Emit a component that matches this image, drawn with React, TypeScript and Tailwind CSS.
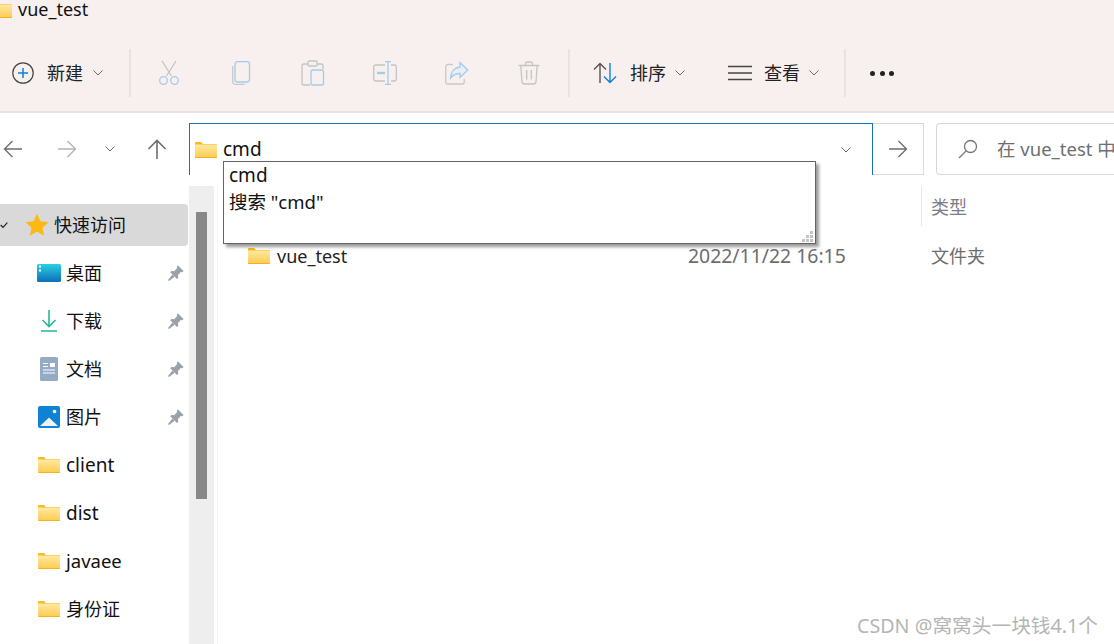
import type { ReactNode } from "react"

const font = "font-['Noto_Sans','Noto_Sans_CJK_SC',sans-serif]"

function Folder({ className = "" }: { className?: string }) {
  return (
    <svg viewBox="0 0 22 16" className={className}>
      <defs>
        <linearGradient id="folderFill" x1="0" y1="0" x2="0" y2="1">
          <stop offset="0" stopColor="#ffe9a4" />
          <stop offset="1" stopColor="#fdcb50" />
        </linearGradient>
      </defs>
      <path d="M0 1a1 1 0 0 1 1-1h5l2 2h14v4H0z" fill="#fbb91f" />
      <rect x="0" y="2.5" width="22" height="13.5" fill="url(#folderFill)" />
      <rect x="0" y="15" width="22" height="1" fill="#f5b21d" />
    </svg>
  )
}

function Chevron({ className = "" }: { className?: string }) {
  return (
    <svg viewBox="0 0 10 6" className={className} fill="none" stroke="#6b6b6b" strokeWidth="1">
      <path d="M0.5 0.5 5 5l4.5-4.5" />
    </svg>
  )
}

function Sep({ className = "" }: { className?: string }) {
  return <div className={`h-12 w-0.5 shrink-0 bg-[#e9e2e0] ${className}`} />
}

function Slot({ children }: { children: ReactNode }) {
  return <div className="flex w-[72px] shrink-0 items-center justify-center">{children}</div>
}

function Pin() {
  return (
    <svg viewBox="0 0 16 16" className="h-4 w-4" fill="#98a2aa">
      <path d="M10 .5 15.6 6 14.3 7.2 12.8 7 10 10 10.3 12.7 9 14 2.2 7.2 3.5 6 6.2 6.2 9 3.2 8.8 1.7z" />
      <path d="M4.5 9.5 6.7 11.7 1 16 0 15z" />
    </svg>
  )
}

function NavRow({ icon, label, pin, selected, labelClass = "" }: { icon: ReactNode; label: string; pin?: boolean; selected?: boolean; labelClass?: string }) {
  return (
    <div className="flex h-12 items-center">
      <div className={`flex h-[42px] w-[188px] items-center rounded-r ${selected ? "bg-[#d9d9d9]" : ""}`}>
        {icon}
        <span className={`text-[#111] ${labelClass}`}>{label}</span>
        {pin && (
          <span className="ml-auto mr-1">
            <Pin />
          </span>
        )}
      </div>
    </div>
  )
}

const folderIcon = <Folder className="ml-[38px] mr-[6px] h-4 w-[22px] shrink-0" />

export default function App() {
  return (
    <div className={`relative flex h-[644px] w-[1114px] flex-col overflow-hidden bg-white text-[18px] ${font}`}>
      {/* Header */}
      <header className="h-[113px] shrink-0 border-b-2 border-[#e9e2e0] bg-[#f7f0ee]">
        <div className="flex h-[18px] items-center">
          <Folder className="-ml-2.5 mr-1.5 mt-0.5 h-4 w-[22px]" />
          <span className="text-[#111]">vue_test</span>
        </div>

        <div className="mt-[31px] flex h-12 items-center">
          <svg viewBox="0 0 22 22" className="ml-3 h-[22px] w-[22px]" fill="none">
            <circle cx="11" cy="11" r="10.2" stroke="#444" strokeWidth="1.2" />
            <path d="M11 6v10M6 11h10" stroke="#0f7fd9" strokeWidth="1.5" />
          </svg>
          <span className="ml-[13px] text-[#222]">新建</span>
          <Chevron className="ml-2.5 mr-[26px] h-1.5 w-2.5" />
          <Sep />
          <div className="ml-0.5 flex">
            <Slot>
              <svg viewBox="0 0 24 26" className="h-[26px] w-6" fill="none" strokeWidth="1.3">
                <path d="M5 1 14.5 16M19 1 9.5 16" stroke="#c4c4c4" />
                <circle cx="6.5" cy="20.5" r="3.8" stroke="#a5cbea" />
                <circle cx="17.5" cy="20.5" r="3.8" stroke="#a5cbea" />
              </svg>
            </Slot>
            <Slot>
              <svg viewBox="0 0 20 24" className="h-6 w-5" fill="none" strokeWidth="1.3">
                <path d="M1.7 5v15.5a3 3 0 0 0 3 3h9" stroke="#c9c9c9" />
                <rect x="4" y="0.7" width="14.5" height="20.3" rx="2.5" stroke="#a5cbea" />
              </svg>
            </Slot>
            <Slot>
              <svg viewBox="0 0 24 26" className="h-[26px] w-6" fill="none" strokeWidth="1.3">
                <path d="M7 4H3a2 2 0 0 0-2 2v17a2 2 0 0 0 2 2h6M16 4h4a2 2 0 0 1 2 2v3" stroke="#c4c4c4" />
                <rect x="7" y="1" width="9" height="5" rx="1.2" stroke="#c4c4c4" />
                <rect x="10" y="10" width="12.5" height="15" rx="2" stroke="#a5cbea" />
              </svg>
            </Slot>
            <Slot>
              <svg viewBox="0 0 24 24" className="h-6 w-6" fill="none" strokeWidth="1.3">
                <path d="M12 4H2.5A1.8 1.8 0 0 0 .7 5.8v12.4A1.8 1.8 0 0 0 2.5 20H12M18 4h3.5a1.8 1.8 0 0 1 1.8 1.8v12.4a1.8 1.8 0 0 1-1.8 1.8H18" stroke="#c4c4c4" />
                <path d="M15 1v22M12 .7h6M12 23.3h6" stroke="#a5cbea" />
                <path d="M4 12h8" stroke="#a5cbea" strokeWidth="2.4" />
              </svg>
            </Slot>
            <Slot>
              <svg viewBox="0 0 24 24" className="h-6 w-6" fill="none" strokeWidth="1.3">
                <path d="M8 3.5H3A2.3 2.3 0 0 0 .7 5.8v14.9A2.3 2.3 0 0 0 3 23h14a2.3 2.3 0 0 0 2.3-2.3V18" stroke="#c9c9c9" />
                <path d="M15 1.5 22.8 9 15 16.5v-4c-4 0-7 1.2-9.5 4.5C6 11 9.5 6.5 15 6z" stroke="#a5cbea" fill="#e6eff5" />
              </svg>
            </Slot>
            <Slot>
              <svg viewBox="0 0 22 24" className="h-6 w-[22px]" fill="none" stroke="#c4c4c4" strokeWidth="1.3">
                <path d="M.5 4.5h21M7.5 4.5V3a2 2 0 0 1 2-2h3a2 2 0 0 1 2 2v1.5" />
                <path d="M2.8 4.5 4 20.7a2.5 2.5 0 0 0 2.5 2.3h9a2.5 2.5 0 0 0 2.5-2.3l1.2-16.2" />
                <path d="M8.7 9v9.5M13.3 9v9.5" />
              </svg>
            </Slot>
          </div>
          <Sep className="ml-[3px]" />
          <svg viewBox="0 0 24 22" className="ml-[23px] h-[22px] w-6" fill="none" strokeWidth="1.4">
            <path d="M7 21V1.5M1 7.5l6-6 6 6" stroke="#555" />
            <path d="M17 1v19.5M11 14.5l6 6 6-6" stroke="#0f7fd9" />
          </svg>
          <span className="ml-[13px] text-[#222]">排序</span>
          <Chevron className="ml-[9px] h-1.5 w-2.5" />
          <svg viewBox="0 0 24 16" className="ml-[43px] h-4 w-6" fill="none" stroke="#444" strokeWidth="1.4">
            <path d="M0 1.5h24M0 8h24M0 14.5h24" />
          </svg>
          <span className="ml-3 text-[#222]">查看</span>
          <Chevron className="ml-[9px] mr-[25px] h-1.5 w-2.5" />
          <Sep />
          <div className="ml-6 flex gap-[4.5px]">
            <span className="h-[5px] w-[5px] rounded-full bg-[#222]" />
            <span className="h-[5px] w-[5px] rounded-full bg-[#222]" />
            <span className="h-[5px] w-[5px] rounded-full bg-[#222]" />
          </div>
        </div>
      </header>

      {/* Address row */}
      <div className="mt-[10px] flex h-[52px] shrink-0 items-stretch">
        <div className="flex w-[189px] shrink-0 items-center">
          <svg viewBox="0 0 20 20" className="ml-[3px] h-5 w-5" fill="none" stroke="#6e6e6e" strokeWidth="1.4">
            <path d="M19 10H1.5M9.5 2 1.5 10l8 8" />
          </svg>
          <svg viewBox="0 0 20 20" className="ml-[34px] h-5 w-5" fill="none" stroke="#b4b4b4" strokeWidth="1.4">
            <path d="M1 10h17.5M10.5 2l8 8-8 8" />
          </svg>
          <Chevron className="ml-[28px] h-1.5 w-2.5" />
          <svg viewBox="0 0 20 20" className="ml-8 h-5 w-5" fill="none" stroke="#6e6e6e" strokeWidth="1.6">
            <path d="M10 20V1.5M1.5 10 10 1.5 18.5 10" />
          </svg>
        </div>
        <div className="flex w-[684px] shrink-0 items-center border-x border-t border-[#1a73b8]">
          <Folder className="ml-[5px] h-4 w-[22px]" />
          <span className="ml-1.5 text-[19px] text-[#111]">cmd</span>
          <Chevron className="ml-auto mr-5 h-1.5 w-3" />
        </div>
        <div className="flex w-[51px] shrink-0 items-center justify-center border-y border-r border-[#d9d9d9]">
          <svg viewBox="0 0 20 20" className="h-5 w-5" fill="none" stroke="#6e6e6e" strokeWidth="1.4">
            <path d="M1 10h17.5M10.5 2l8 8-8 8" />
          </svg>
        </div>
        <div className="ml-3 flex flex-1 items-center overflow-hidden whitespace-nowrap rounded-l-sm border-y border-l border-[#d9d9d9] text-[#6f6f6f]">
          <svg viewBox="0 0 20 20" className="ml-[21px] h-5 w-5 shrink-0" fill="none" stroke="#777" strokeWidth="1.3">
            <circle cx="12.5" cy="7.5" r="6" />
            <path d="M8 12 1 19" />
          </svg>
          <span className="ml-[19px] text-[18.5px]">在 vue_test 中搜索</span>
        </div>
      </div>

      {/* Body */}
      <div className="mt-[11px] flex min-h-0 flex-1">
        <nav className="w-[189px] shrink-0 pt-[15px]">
          <NavRow
            selected
            label="快速访问"
            icon={
              <>
                <svg viewBox="0 0 12 10" className="mr-[17px] h-2 w-2 shrink-0" fill="none" stroke="#222" strokeWidth="1.8">
                  <path d="M1 5l3.5 3.5L11 1.5" />
                </svg>
                <svg viewBox="0 0 24 24" className="mr-[5px] h-6 w-6 shrink-0" fill="#fcb813">
                  <path d="M12 .8l3.4 7.5 8.1.9-6 5.5 1.7 8L12 18.6l-7.2 4.1 1.7-8-6-5.5 8.1-.9z" />
                </svg>
              </>
            }
          />
          <NavRow
            pin
            label="桌面"
            icon={
              <svg viewBox="0 0 24 18" className="ml-[37px] mr-[5px] h-[18px] w-6 shrink-0">
                <defs>
                  <linearGradient id="deskFill" x1="0" y1="0" x2="0" y2="1">
                    <stop offset="0" stopColor="#2ad0e4" />
                    <stop offset="1" stopColor="#0c6fb8" />
                  </linearGradient>
                </defs>
                <rect width="24" height="18" rx="1.5" fill="url(#deskFill)" />
                <rect x="2" y="1.5" width="2" height="2" fill="#fff" />
                <rect x="2" y="5.5" width="2" height="2" fill="#fff" />
              </svg>
            }
          />
          <NavRow
            pin
            label="下载"
            icon={
              <svg viewBox="0 0 16 22" className="ml-[41px] mr-[9px] h-[22px] w-4 shrink-0" fill="none" stroke="#25b79d" strokeWidth="1.6">
                <path d="M8 0v16M1.5 10 8 16.5 14.5 10M0 21h16" />
              </svg>
            }
          />
          <NavRow
            pin
            label="文档"
            icon={
              <svg viewBox="0 0 18 24" className="ml-10 mr-2 h-6 w-[18px] shrink-0">
                <rect width="18" height="24" rx="1.5" fill="#94abc6" />
                <path d="M3 6.5h5M3 9.5h5M3 13h12M3 16h12" stroke="#fff" strokeWidth="1" />
                <rect x="10" y="6" width="5" height="4" fill="#fff" />
              </svg>
            }
          />
          <NavRow
            pin
            label="图片"
            icon={
              <svg viewBox="0 0 22 22" className="ml-[38px] mr-1.5 h-[22px] w-[22px] shrink-0">
                <rect width="22" height="22" rx="2" fill="#0f82d6" />
                <circle cx="16.5" cy="5.5" r="1.8" fill="#fff" />
                <path d="M2 20 11 11.5 20 20z" fill="#eaf4fc" />
              </svg>
            }
          />
          <NavRow label="client" labelClass="text-[19px]" icon={folderIcon} />
          <NavRow label="dist" labelClass="text-[19px]" icon={folderIcon} />
          <NavRow label="javaee" labelClass="text-[18.5px]" icon={folderIcon} />
          <NavRow label="身份证" icon={folderIcon} />
        </nav>

        <div className="w-[25px] shrink-0 bg-[#eeeeee] pl-[7px] pt-[26px]">
          <div className="h-[287px] w-[11px] bg-[#888888]" />
        </div>

        <main className="ml-[3px] flex-1 border-l border-[#f5f5f5] text-[#6d6d6d]">
          <div className="ml-[703px] flex h-10 items-center border-l border-[#e6e6e6] pl-[9px] pt-0.5 text-[#7c7c88]">类型</div>
          <div className="mt-3 flex h-9 items-center">
            <Folder className="ml-[30px] mr-[7px] h-4 w-[22px] shrink-0" />
            <span className="w-[411px] shrink-0 text-[#222]">vue_test</span>
            <span className="w-[243px] shrink-0 text-[19.4px]">2022/11/22 16:15</span>
            <span>文件夹</span>
          </div>
        </main>
      </div>

      {/* Autocomplete popup */}
      <div className="absolute left-[223px] top-[161px] h-[83px] w-[593px] border border-[#646464] bg-white pl-[5px] text-[18.5px] text-[#111] shadow-[3px_3px_3px_rgba(0,0,0,0.4)]">
        <div className="flex h-[26px] items-center pt-px text-[19px]">cmd</div>
        <div className="flex h-[27px] items-center">搜索 "cmd"</div>
        <svg viewBox="0 0 11 11" className="absolute bottom-[1px] right-[2px] h-[11px] w-[11px]" fill="#c4c4c4">
          <rect x="8" y="0" width="3" height="3" />
          <rect x="4" y="4" width="3" height="3" />
          <rect x="8" y="4" width="3" height="3" />
          <rect x="0" y="8" width="3" height="3" />
          <rect x="4" y="8" width="3" height="3" />
          <rect x="8" y="8" width="3" height="3" />
        </svg>
      </div>

      {/* Watermark */}
      <span className="absolute left-[857px] top-[612px] whitespace-nowrap text-[19.7px] leading-7 text-[#b5b5b5]">CSDN @窝窝头一块钱4.1个</span>
    </div>
  )
}
